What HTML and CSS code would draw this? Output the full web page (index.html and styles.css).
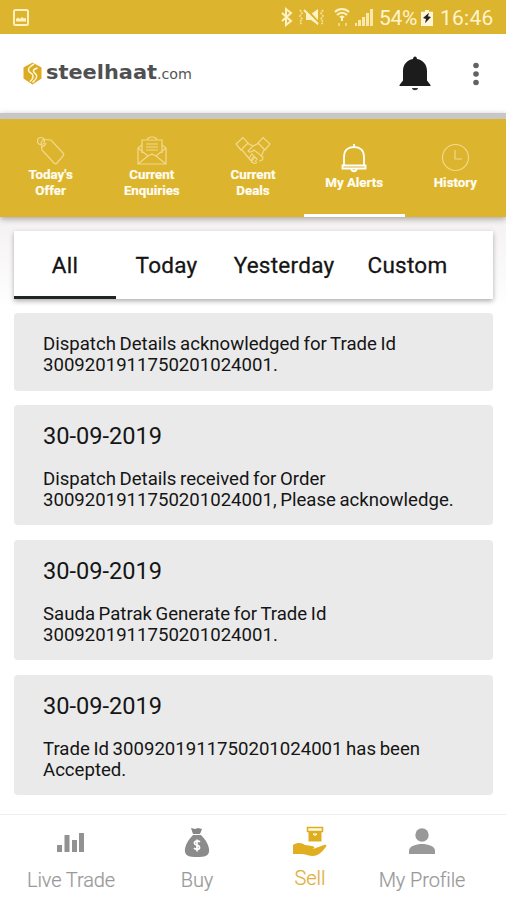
FILE: index.html
```html
<!DOCTYPE html>
<html lang="en">
<head>
<meta charset="utf-8">
<title>My Alerts</title>
<link rel="stylesheet" href="styles.css">
</head>
<body>
<div class="status">
  <svg class="status-photo" width="16" height="17" viewBox="0 0 16 17"><rect x="1" y="1" width="14" height="15" rx="1.500" fill="none" stroke="#fff0bd" stroke-width="2"/><path d="M3 12.500V10l2-1.500 2 1.500 2-2 2 1.500 2-.5v3.500z" fill="#fff2c4"/></svg>
  <svg class="status-icons" width="96" height="22" viewBox="0 0 96 22">
    <path d="M2 7l9 8-5 4V3l5 4-9 8" fill="none" stroke="#fff2c4" stroke-width="2"/>
    <path d="M26 8h5l7-5v16l-7-5h-5z" fill="#fff2c4"/>
    <path d="M26 3l14 15" stroke="#ddb42e" stroke-width="2.500"/><path d="M24 4l14 14" stroke="#fff2c4" stroke-width="2"/>
    <path d="M20 4l2 3-2 3 2 3-2 3 2 3M43 4l-2 3 2 3-2 3 2 3-2 3" fill="none" stroke="#f7df92" stroke-width="1.700" stroke-dasharray="2 1"/>
    <path d="M55 6c4-4 10-4 14 0M57 9c3-3 7-3 10 0M60 11.500c1-1.500 3-1.500 4 0" fill="none" stroke="#fff2c4" stroke-width="2"/><path d="M62 10v5" stroke="#fff2c4" stroke-width="2"/>
    <path d="M59 20v-3M66 20v-3" fill="none" stroke="#f7df92" stroke-width="1.5"/>
    <path d="M75 17h2v3h-2zM78 14h3v6h-3zM82 11h3v9h-3zM86 7h3v13h-3zM90 3h3v17h-3z" fill="#fbe8aa"/>
  </svg>
  <span class="battery-text">54%</span>
  <svg class="battery" width="12" height="16" viewBox="0 0 12 18" preserveAspectRatio="none"><path d="M4 0h4v2h4v16H0V2h4z" fill="#fff6d8"/><path d="M8 3L2 9l3 1-1 5 6-7-3-1z" fill="#222"/></svg>
  <span class="clock">16:46</span>
</div>
<header class="header">
  <svg class="brand" width="174" height="28" viewBox="0 0 174 28">
    <path d="M10.500 2.500l9 5v11l-9 6-9-6v-11z" fill="#dbac22"/>
    <path d="M12 4C7 7 5.500 9 7 11.500c1 1.500 4 2 4 4.500s-1 4-3 5.500M15.500 8c-3 1-4.500 1.500-4 3.500s3.500 2 3.200 5-2 4-4.200 6" fill="none" stroke="#fff6da" stroke-width="1.500"/>
    <text class="brand-name" x="24" y="18.500" textLength="111" lengthAdjust="spacingAndGlyphs">steelhaat</text>
    <text class="brand-domain" x="135" y="18.500" textLength="35" lengthAdjust="spacingAndGlyphs">.com</text>
  </svg>
  <svg class="bell" width="32" height="36" viewBox="0 0 32 36"><path d="M14 3c0-3.500 4-3.500 4 0 6.500 1 10 6 10 12v9.500l3.500 4.500v1H.5v-1L4 24.500V15C4 9 7.500 4 14 3z" fill="#1c1c1c"/><path d="M13 32h6c-.5 3-5.500 3-6 0z" fill="#333"/></svg>
  <svg class="more" width="8" height="24" viewBox="0 0 8 24"><g fill="#626262"><circle cx="4" cy="3.500" r="2.800"/><circle cx="4" cy="12" r="2.800"/><circle cx="4" cy="20.500" r="2.800"/></g></svg>
</header>
<nav class="tabs">
  <div class="tab"><svg width="30" height="30" viewBox="0 0 30 30"><path d="M5 7L7 3.500l8 .5 12 13c1 1 1 2 0 3l-6 7c-1 1-2 1-3 0L6 14 5 7z"/><circle cx="5" cy="5" r="3.500"/><path d="M5 11c1 0 4-1 5-4"/></svg><span>Today's<br>Offer</span></div>
  <div class="tab"><svg width="30" height="30" viewBox="0 0 30 30"><path d="M5 17V4h20v13M10 4c1-4 9-4 10 0M5 9l-4 3v16h28V12l-4-3M1 12l10 8L1 28M29 12l-10 8 10 8M11 20l4-2 4 2M9 8h12M9 11h12M9 14h12"/></svg><span>Current<br>Enquiries</span></div>
  <div class="tab"><svg class="wide" width="36" height="30" viewBox="0 0 36 30"><path d="M8 1.500L1 8l5 6 7-7zM28 1.500l7 6.500-5 6-7-7zM12 7l6 3 6-3M7 14l10 12c2 2 4 2 5 0M18 10l-5 5c1 2 4 1 6-1l9 7c0 3-2 4-4 4M29 14l-3 7M14 22l3-4 2 2-3 4M17 25l3-4 2 2-2 3"/></svg><span>Current<br>Deals</span></div>
  <div class="tab active"><svg width="30" height="30" viewBox="0 0 30 30"><path d="M5 21v-8C5 6 9 3 15 3s10 3 10 10v8M3.500 21.500h23v3h-23zM15 3V0M12.500 25c0 3 5 3 5 0"/></svg><span>My Alerts</span></div>
  <div class="tab"><svg width="30" height="30" viewBox="0 0 30 30"><circle cx="15.500" cy="13.500" r="13"/><path d="M15 6v9h7"/></svg><span>History</span></div>
</nav>
<main class="content">
  <div class="filters"><div class="filter all">All</div><div class="filter today">Today</div><div class="filter yesterday">Yesterday</div><div class="filter custom">Custom</div></div>
  <article class="card short"><p>Dispatch Details acknowledged for Trade Id<br>3009201911750201024001.</p></article>
  <article class="card"><h2>30-09-2019</h2><p>Dispatch Details received for Order<br>3009201911750201024001, Please acknowledge.</p></article>
  <article class="card"><h2>30-09-2019</h2><p>Sauda Patrak Generate for Trade Id<br>3009201911750201024001.</p></article>
  <article class="card"><h2>30-09-2019</h2><p>Trade Id 3009201911750201024001 has been<br>Accepted.</p></article>
</main>
<footer class="bottom">
  <div class="nav-item"><svg width="36" height="32" viewBox="0 0 36 32"><path d="M4 19h5v7H4zM11.500 9h5v17h-5zM19 14h5v12h-5zM26 7h5v19h-5z" fill="#929292"/></svg><span>Live Trade</span></div>
  <div class="nav-item"><svg width="36" height="32" viewBox="0 0 36 32"><path d="M12 2l4 1 3-1 4 1-2 5h-7z" fill="#858585"/><path d="M14 9h8c4 4 9 11 8 17-1 4-4 5-12 5S7 30 6 26C5 20 10 13 14 9z" fill="#8b8b8b"/><path d="M21 16c-2-2-6-1-5.500 1.500.5 2 5 1 5 4 0 2.500-4 2.500-5.500.5M18 13.500v12" fill="none" stroke="#fff" stroke-width="1.700"/></svg><span>Buy</span></div>
  <div class="nav-item selected"><svg width="36" height="32" viewBox="0 0 36 32"><path d="M15.500 1.500h15v4h-15z" fill="#fff8df" stroke="#dfae20" stroke-width="1.500"/><path d="M16.500 6h13v9.500h-13z" fill="#dfae20"/><path d="M21 8h4l-2 1.500z" stroke="#fff" fill="none"/><path d="M1 19c5-3 9-2 12 0l7 1c3 0 3 3 0 3h-5 6l11-4c3-1 3 1 1 3-3 4-7 8-12 8-4 0-8-2-12-2H1z" fill="#e1ae22"/></svg><span>Sell</span></div>
  <div class="nav-item"><svg width="36" height="32" viewBox="0 0 36 32"><circle cx="18" cy="9" r="6.700" fill="#999"/><path d="M5 28v-3c0-5 7-7 13-7s13 2 13 7v3z" fill="#999"/></svg><span class="profile">My Profile</span></div>
</footer>
</body>
</html>
```
FILE: styles.css
```css
* { box-sizing: border-box; }
body { margin: 0; width: 506px; height: 900px; overflow: hidden; background: #fff; font-family: Roboto, "Liberation Sans", sans-serif; color: #151515; display: flex; flex-direction: column; }
svg { display: block; flex: none; }
.status { height: 34px; flex: none; background: #ddb42e; color: #fff4ce; display: flex; align-items: center; padding: 0 13px; font-size: 21px; }
.status-icons { margin-left: 251px; }
.battery-text { width: 39px; margin-left: 3px; letter-spacing: -.3px; padding-top: 2px; }
.battery { margin-left: 4px; margin-top: 2px; }
.clock { margin-left: 7px; padding-top: 2px; letter-spacing: .2px; }
.header { height: 79px; flex: none; display: flex; align-items: center; padding-left: 22px; }
.brand-name { font: bold 20px "DejaVu Sans", sans-serif; fill: #505052; }
.brand-domain { font: 14px "DejaVu Sans", sans-serif; fill: #555; }
.bell { margin-left: 203px; }
.more { margin-left: 41px; }
.tabs { height: 104px; flex: none; border-top: 6px solid #c8c7c7; background: #ddb42e; display: flex; position: relative; box-shadow: 0 2px 6px #aaa3a0; }
.tab { width: 20%; display: flex; flex-direction: column; align-items: center; justify-content: center; color: #fffdf0; font-size: 13.3px; line-height: 16.5px; font-weight: 700; text-align: center; border-bottom: 3px solid transparent; padding-top: 2px; }
.tab span { margin-top: 1px; -webkit-text-stroke: .2px #fffdf0; }
.tab svg { fill: none; stroke: #f2d98b; stroke-width: 1.2; }
.tab.active svg { stroke: #fff; stroke-width: 1.8; }
.tab.active { border-color: #fff; }
.content { padding: 14px 13px 0 14px; flex: 1; background: linear-gradient(#f4f1f2, #fff 90px); }
.filters { height: 68px; display: flex; background: #fff; box-shadow: 0 2px 5px #aaa; font-size: 22.5px; line-height: 68px; text-align: center; letter-spacing: .25px; -webkit-text-stroke: .3px #151515; }
.filter { height: 68px; }
.all { width: 102px; border-bottom: 3px solid #202622; }
.today { width: 101px; }
.yesterday { width: 134px; }
.custom { width: 113px; }
.card { height: 120px; margin-top: 15px; padding: 17px 29px; background: #eaeaea; border-radius: 4px; }
.card.short { height: 78px; margin-top: 14px; padding-top: 21px; }
.card.short + .card { margin-top: 14px; }
h2 { margin: 0; font-size: 23.6px; line-height: 28px; font-weight: 400; }
p { margin: 0; font-size: 18.6px; line-height: 21px; word-spacing: -1px; white-space: nowrap; }
h2 + p { margin-top: 19px; }
.bottom { height: 86px; flex: none; border-top: 1px solid #eee; padding: 11px 22px 0 8px; display: grid; grid-template-columns: 126px 126px 100px 124px; background: #fff; }
.nav-item { display: flex; flex-direction: column; align-items: center; color: #999; font-size: 20px; line-height: 24px; font-weight: 300; white-space: nowrap; }
.nav-item span { margin-top: 10px; letter-spacing: -.1px; -webkit-text-stroke: .2px currentColor; }
.selected { color: #dfae3c; }
.selected span { margin-top: 8px; }
```
